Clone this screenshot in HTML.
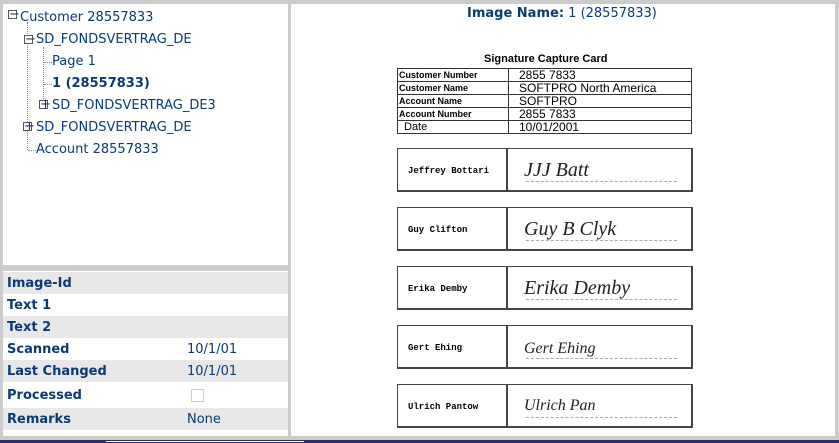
<!DOCTYPE html>
<html><head><meta charset="utf-8"><style>
*{margin:0;padding:0;box-sizing:border-box}
body{width:839px;height:443px;background:#cccccc;position:relative;overflow:hidden;font-family:Verdana,"DejaVu Sans",sans-serif;font-size:13px;color:#0b3a74}
.a{position:absolute}
.tree div{position:absolute;white-space:nowrap;color:#0b3a74;font-size:13px}
.box{position:absolute;width:9px;height:9px;border:1px solid #555;background:#fff;font-size:9px;line-height:7px;text-align:center;color:#000}
.dv{position:absolute;border-left:1px dotted #888}
.dh{position:absolute;border-top:1px dotted #888}
.row{position:absolute;left:3px;width:285px;height:22px;font-weight:bold;font-size:13px;line-height:24px;padding-left:4px}
.row span{position:absolute;left:184px;font-weight:normal}
.g{background:#e8e8e8}.w{background:#fff}
.card{font-family:"Liberation Sans",Arial,sans-serif;color:#000}
.t td{border:1px solid #333;font-size:9px;font-weight:bold;height:13px;padding-left:1px;line-height:11px}
.sig{position:absolute;left:397px;width:296px;height:44px;border:2px solid #444;border-top-width:1px;border-left-width:1px}
.sig .n{position:absolute;left:0;top:0;width:110px;height:100%;border-right:2px solid #444;font-family:"Liberation Mono",monospace;font-size:9px;font-weight:bold;line-height:44px;padding-left:10px}
.sig .s{position:absolute;left:126px;top:10px;font-family:"Liberation Serif",serif;font-style:italic;font-size:20px;color:#222}
.sig .d{position:absolute;left:128px;right:14px;top:32px;border-top:1px dashed #aaa}
</style></head><body>
<div class="a" style="left:3px;top:4px;width:285px;height:261px;background:#fff"></div>
<div class="a" style="left:3px;top:271px;width:285px;height:165px;background:#fff"></div>
<div class="a" style="left:291px;top:4px;width:544px;height:432px;background:#fff"></div>
<div class="a" style="left:0;top:440px;width:839px;height:3px;background:#2f2f5f"></div>
<div class="a" style="left:105px;top:440px;width:200px;height:3px;background:#fff;border:1px solid #2f2f5f"></div>

<div class="tree">
<div class="box" style="left:8px;top:10px">−</div>
<div style="left:20px;top:10px">Customer 28557833</div>
<div class="dv" style="left:27px;top:22px;height:128px"></div>
<div class="box" style="left:24px;top:35px">−</div>
<div style="left:36px;top:32px">SD_FONDSVERTRAG_DE</div>
<div class="dv" style="left:43px;top:47px;height:58px"></div>
<div class="dh" style="left:44px;top:62px;width:8px"></div>
<div style="left:52px;top:54px">Page 1</div>
<div class="dh" style="left:44px;top:84px;width:8px"></div>
<div style="left:52px;top:76px;font-weight:bold">1 (28557833)</div>
<div class="box" style="left:39px;top:100px">+</div>
<div style="left:52px;top:98px">SD_FONDSVERTRAG_DE3</div>
<div class="box" style="left:23px;top:122px">+</div>
<div style="left:36px;top:120px">SD_FONDSVERTRAG_DE</div>
<div class="dh" style="left:28px;top:150px;width:8px"></div>
<div style="left:36px;top:142px">Account 28557833</div>
</div>

<div class="row g" style="top:272px">Image-Id</div>
<div class="row w" style="top:294px">Text 1</div>
<div class="row g" style="top:316px">Text 2</div>
<div class="row w" style="top:338px">Scanned<span>10/1/01</span></div>
<div class="row g" style="top:360px">Last Changed<span>10/1/01</span></div>
<div class="row w" style="top:382px;height:26px;line-height:27px">Processed<span style="left:188px;top:7px;width:13px;height:13px;border:1px solid #ccc"></span></div>
<div class="row g" style="top:408px">Remarks<span>None</span></div>

<div class="a" style="left:467px;top:6px;font-size:13px;white-space:nowrap"><b>Image Name:</b> 1 (28557833)</div>

<div class="card">
<div class="a" style="left:484px;top:53px;font-size:11px;font-weight:bold">Signature Capture Card</div>
<table class="a t" style="left:397px;top:68px;width:295px;border-collapse:collapse">
<tr><td style="width:111px">Customer Number</td><td style="font-weight:normal;font-size:12px;padding-left:10px">2855 7833</td></tr>
<tr><td>Customer Name</td><td style="font-weight:normal;font-size:12px;padding-left:10px">SOFTPRO North America</td></tr>
<tr><td>Account Name</td><td style="font-weight:normal;font-size:12px;padding-left:10px">SOFTPRO</td></tr>
<tr><td>Account Number</td><td style="font-weight:normal;font-size:12px;padding-left:10px">2855 7833</td></tr>
<tr><td style="font-weight:normal;font-size:11px;padding-left:6px">Date</td><td style="font-weight:normal;font-size:12px;padding-left:10px">10/01/2001</td></tr>
</table>
<div class="sig" style="top:148px"><div class="n">Jeffrey Bottari</div><div class="s">JJJ Batt</div><div class="d"></div></div>
<div class="sig" style="top:207px"><div class="n">Guy Clifton</div><div class="s">Guy B Clyk</div><div class="d"></div></div>
<div class="sig" style="top:266px"><div class="n">Erika Demby</div><div class="s">Erika Demby</div><div class="d"></div></div>
<div class="sig" style="top:325px"><div class="n">Gert Ehing</div><div class="s" style="font-size:16px;top:14px">Gert Ehing</div><div class="d"></div></div>
<div class="sig" style="top:384px"><div class="n">Ulrich Pantow</div><div class="s" style="font-size:16px;top:12px">Ulrich Pan</div><div class="d"></div></div>
</div>
</body></html>
